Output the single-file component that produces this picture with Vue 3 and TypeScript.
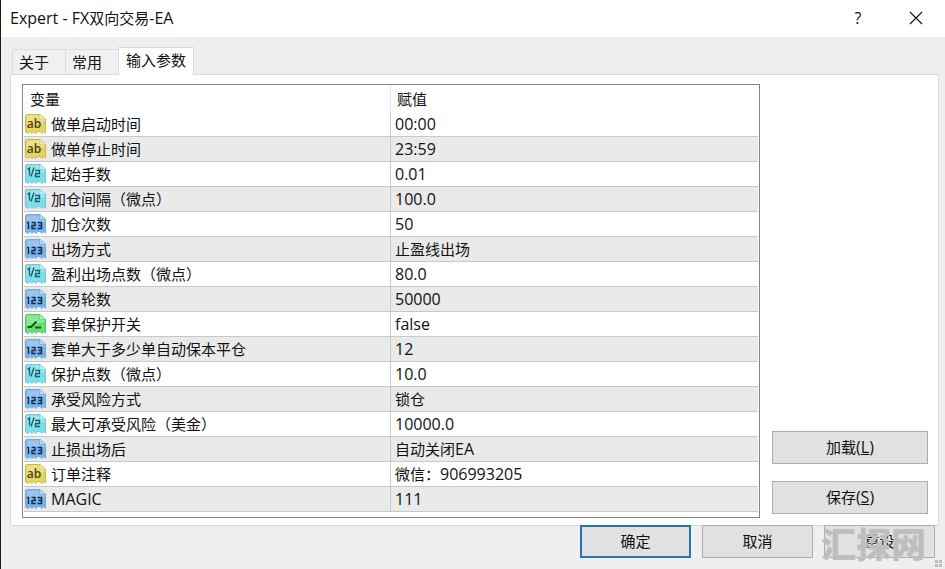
<script setup lang="ts">
import { ref } from 'vue'

type Kind = 'text' | 'real' | 'int' | 'bool'
interface Param {
  kind: Kind
  name: string
  value: string
}
interface Run {
  text: string
  latin: boolean
}

const title = 'Expert - FX双向交易-EA'
const tabs = ['关于', '常用', '输入参数']
const active = ref(2)

const params: Param[] = [
  { kind: 'text', name: '做单启动时间', value: '00:00' },
  { kind: 'text', name: '做单停止时间', value: '23:59' },
  { kind: 'real', name: '起始手数', value: '0.01' },
  { kind: 'real', name: '加仓间隔（微点）', value: '100.0' },
  { kind: 'int', name: '加仓次数', value: '50' },
  { kind: 'int', name: '出场方式', value: '止盈线出场' },
  { kind: 'real', name: '盈利出场点数（微点）', value: '80.0' },
  { kind: 'int', name: '交易轮数', value: '50000' },
  { kind: 'bool', name: '套单保护开关', value: 'false' },
  { kind: 'int', name: '套单大于多少单自动保本平仓', value: '12' },
  { kind: 'real', name: '保护点数（微点）', value: '10.0' },
  { kind: 'int', name: '承受风险方式', value: '锁仓' },
  { kind: 'real', name: '最大可承受风险（美金）', value: '10000.0' },
  { kind: 'int', name: '止损出场后', value: '自动关闭EA' },
  { kind: 'text', name: '订单注释', value: '微信：906993205' },
  { kind: 'int', name: 'MAGIC', value: '111' },
]

// Latin runs are set one size larger than the Chinese around them
function runs(s: string): Run[] {
  const parts = s.match(/[\x20-\x7e]+|[^\x20-\x7e]+/g) ?? []
  return parts.map((text) => ({ text, latin: /^[\x20-\x7e]/.test(text) }))
}
</script>

<template>
  <main class="dialog">
    <header class="titlebar">
      <h1><span v-for="r in runs(title)" :key="r.text" :class="{ latin: r.latin }">{{ r.text }}</span></h1>
      <button class="caption latin" type="button" aria-label="帮助">?</button>
      <button class="caption" type="button" aria-label="关闭">
        <svg width="14" height="14" viewBox="0 0 14 14"><path d="M1 1 13 13M13 1 1 13" stroke="#111" stroke-width="1.1" /></svg>
      </button>
    </header>

    <div class="body">
      <nav class="tabs" role="tablist">
        <button
          v-for="(t, i) in tabs"
          :key="t"
          type="button"
          role="tab"
          class="tab"
          :class="{ on: active === i }"
          :aria-selected="active === i"
          @click="active = i"
        >{{ t }}</button>
      </nav>

      <section class="panel">
        <div class="list">
          <table>
            <thead>
              <tr><th>变量</th><th>赋值</th></tr>
            </thead>
            <tbody>
              <tr v-for="p in params" :key="p.name">
                <td>
                  <div class="cell">
                    <svg class="icon" :class="p.kind" width="22" height="22" viewBox="0 0 22 22">
                      <path class="sheet" d="M2.5 1.5H16L21.5 6V20L19.5 18.5 18 20.5 16 18.5 13.5 18.5 12 20.5 10 18.5 8 20.5 6 18.5 4 20.5 1.5 19V2.5Z" />
                      <path class="shine" d="M3 2.5H15V7H20.5V9L3 13Z" />
                      <path class="fold" d="M16 1.5V6H21.5Z" />
                      <path v-if="p.kind === 'bool'" class="mark" d="M3.5 14H7L12.5 8.5M12 13.5V14.5H17" />
                      <path v-else-if="p.kind === 'real'" class="mark thin" d="M3.5 6.5 5.5 5V12.5M10 4.5 7 13.5M11 7.5H15.5V10.5H11.5V13.5H16" />
                      <text v-else-if="p.kind === 'text'" x="10" y="15" text-anchor="middle">ab</text>
                      <path v-else class="mark digits" d="M3 9.5H4.5V16M7.5 9.5H11V12.5H8V15.5H11.7M13.5 9.5H17.5V15.5H13.5M14.5 12.5H17.5" />
                    </svg>
                    <span :class="{ latin: p.name === 'MAGIC' }">{{ p.name }}</span>
                  </div>
                </td>
                <td><span v-for="r in runs(p.value)" :key="r.text" :class="{ latin: r.latin }">{{ r.text }}</span></td>
              </tr>
            </tbody>
          </table>
        </div>
        <div class="side">
          <button class="btn" type="button">加载<span class="latin">(<u>L</u>)</span></button>
          <button class="btn" type="button">保存<span class="latin">(<u>S</u>)</span></button>
        </div>
      </section>

      <footer class="actions">
        <button class="btn primary" type="button">确定</button>
        <button class="btn" type="button">取消</button>
        <div class="last">
          <button class="btn" type="button">重设</button>
          <span class="watermark">汇探网</span>
        </div>
      </footer>
    </div>
    <svg class="grip" width="8" height="8" viewBox="0 0 8 8"><path d="M0 0H3V3H0ZM4 0H7V3H4ZM0 4H3V7H0ZM4 4H7V7H4Z" fill="#bdbdbd" /></svg>
  </main>
</template>

<style>
body {
  background: #efefef;
}
</style>

<style scoped>
.dialog {
  position: relative;
  box-sizing: border-box;
  min-height: 100vh;
  border-left: 1px solid #1c1a1c;
  background: #efefef;
  color: #111;
  font: 15px/24px "Open Sans", "Noto Sans CJK SC", sans-serif;
}
button {
  margin: 0;
  font: inherit;
  color: inherit;
}
.latin {
  font-size: 16px;
  line-height: 1;
}
.titlebar {
  display: flex;
  align-items: center;
  height: 37px;
  padding-left: 9px;
  background: #fff;
}
h1 {
  flex: 1;
  margin: 0;
  padding-bottom: 2px;
  font: inherit;
}
.caption {
  display: flex;
  align-items: center;
  justify-content: center;
  width: 58px;
  height: 37px;
  padding: 0 0 2px;
  border: 0;
  background: none;
}
.body {
  padding: 10px 6px 11px 9px;
}
.tabs {
  display: flex;
  align-items: flex-end;
  height: 27px;
  padding-left: 2px;
}
.tab {
  height: 25px;
  padding: 0 16px 2px 6px;
  border: 1px solid #dadada;
  border-width: 1px 0 0 1px;
  background: #f0f0f0;
}
.tab.on {
  height: 28px;
  margin-bottom: -1px;
  padding: 0 7px 3px;
  border-right-width: 1px;
  background: #fff;
  z-index: 1;
}
.panel {
  display: flex;
  gap: 12px;
  padding: 9px 10px 7px 11px;
  border: 1px solid #dadada;
  background: #fff;
}
.list {
  flex: 1;
  padding: 0 1px 5px;
  border: 1px solid #848488;
}
table {
  width: 100%;
  table-layout: fixed;
  border-collapse: separate;
  border-spacing: 0;
}
th,
td {
  height: 24px;
  padding: 0 0 0 4px;
  border-bottom: 1px solid #c8c8c8;
  text-align: left;
  font-weight: 400;
}
th {
  height: 27px;
  padding: 0 6px;
  border: 0;
  box-sizing: border-box;
}
td:first-child {
  padding-left: 0;
}
th:first-child,
td:first-child {
  border-right: 1px solid #c8c8c8;
}
th:first-child {
  border-right-color: #e4e9ec;
}
tbody tr:nth-child(even) {
  background: #eaeaea;
}
.cell {
  display: flex;
  align-items: center;
  gap: 5px;
  height: 24px;
}
.side {
  display: flex;
  flex-direction: column;
  justify-content: flex-end;
  gap: 17px;
  width: 156px;
  padding-bottom: 4px;
}
.btn {
  box-sizing: border-box;
  height: 33px;
  padding: 0 0 2px;
  border: 1px solid #adadad;
  background: #e1e1e1;
}
.btn.primary {
  border: 2px solid #1f75b5;
}
.actions {
  display: flex;
  justify-content: flex-end;
  gap: 11px;
  margin-top: -1px;
  padding-right: 4px;
}
.actions .btn {
  width: 111px;
}
.last {
  position: relative;
}
.last .btn {
  display: block;
}
.watermark {
  position: absolute;
  left: -3px;
  top: 0;
  font: 900 35px/36px "Noto Sans CJK SC", sans-serif;
  color: #bebebe;
  pointer-events: none;
}
.grip {
  position: absolute;
  right: 2px;
  bottom: 1px;
}
.icon {
  flex: none;
}
.shine {
  fill: #fff;
  opacity: 0.25;
}
.fold {
  fill: #fff;
  fill-opacity: 0.45;
}
.mark {
  fill: none;
  stroke-width: 2;
}
.mark.thin {
  stroke-width: 1.4;
}
.mark.digits {
  stroke-width: 1.4;
}
.text .sheet {
  fill: #e6d661;
  stroke: #c8b655;
}
.text text {
  font: 600 12px "Open Sans", sans-serif;
  fill: #4a4210;
}
.real .sheet {
  fill: #7cdeea;
  stroke: #7cc4ce;
}
.real .mark {
  stroke: #14606c;
}
.int .sheet {
  fill: #79b3e8;
  stroke: #7aa8d4;
}
.int .mark {
  stroke: #0b2b55;
}
.bool .sheet {
  fill: #66e070;
  stroke: #5cc466;
}
.bool .mark {
  stroke: #0c5a18;
}
</style>
